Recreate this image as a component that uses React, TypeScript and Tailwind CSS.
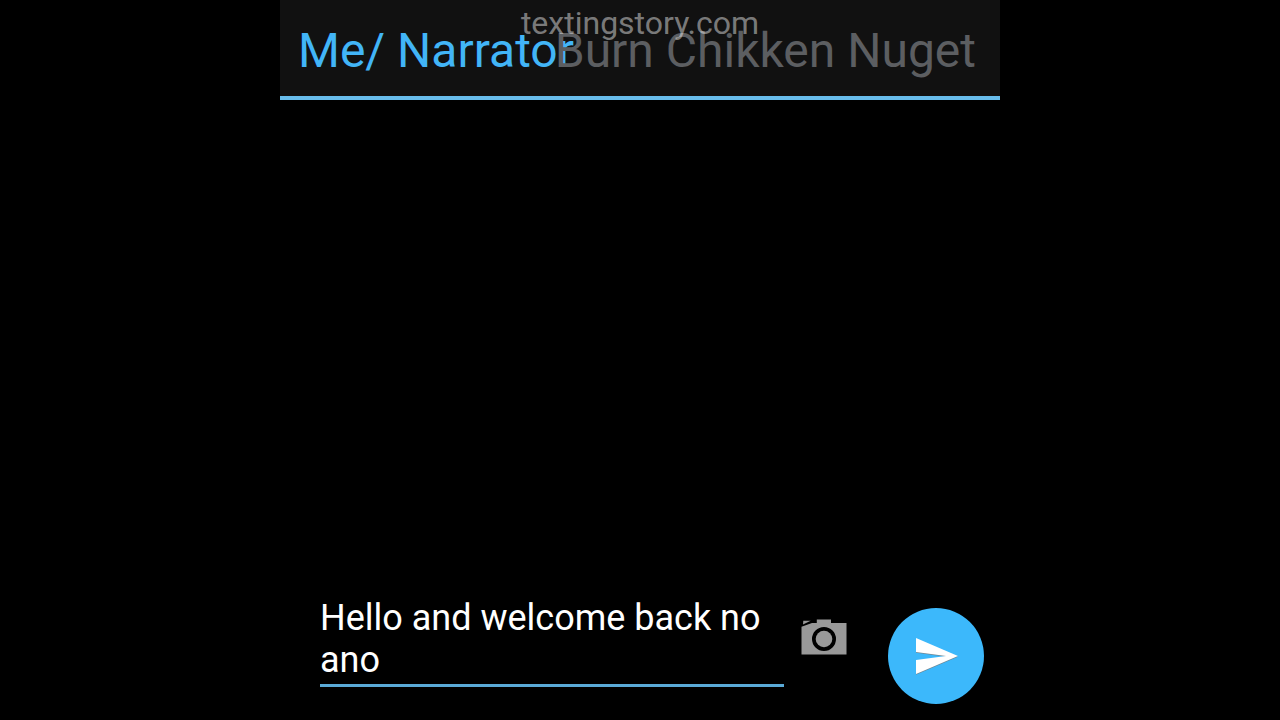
import React, { useState } from 'react';

const CameraIcon = () => (
  <svg viewBox="0 0 48 48" className="w-12 h-12" aria-hidden="true">
    <path
      fill="#999999"
      fillRule="evenodd"
      d="M16.800 5.500h14.200v3.500h15.500v31.500H1.500V12.800L12 9h4.800zM24 13a12 12 0 1 0 0 24a12 12 0 1 0 0-24z"
    />
    <path fill="#999999" d="M3.300 6.700H10.700L3 10.600z" />
    <circle cx="24" cy="25" r="8.300" fill="#999999" />
  </svg>
);

const SendIcon = () => (
  <svg viewBox="0 0 24 24" className="w-12 h-12" aria-hidden="true">
    <path fill="#6f8794" transform="translate(0 .35)" d="M2.010 21L23 12 2.010 3 2 10l15 2-15 2z" />
    <path fill="#ffffff" d="M2.010 21L23 12 2.010 3 2 10l15 2-15 2z" />
  </svg>
);

export default function App() {
  const [message, setMessage] = useState('Hello and welcome back no ano');
  const [sender, setSender] = useState<'me' | 'other'>('me');

  return (
    <div className="min-h-screen bg-black font-[Roboto,sans-serif]">
      <main className="relative flex flex-col w-full max-w-[720px] min-h-screen mx-auto">
        <header className="flex h-[100px] pl-[18px] pr-6 bg-[#111111] border-b-4 border-[#68bdec] text-5xl whitespace-nowrap">
          <button
            type="button"
            onClick={() => setSender('me')}
            className={`flex-1 min-w-0 pt-1.5 text-left ${sender === 'me' ? 'text-[#42b5f7]' : 'text-[#5c5e61]'}`}
          >
            Me/ Narrator
          </button>
          <button
            type="button"
            onClick={() => setSender('other')}
            className={`shrink-0 pt-1.5 ${sender === 'other' ? 'text-[#42b5f7]' : 'text-[#5c5e61]'}`}
          >
            Burn Chikken Nuget
          </button>
        </header>
        <p className="absolute inset-x-0 top-1 text-center text-[32px] leading-[38px] text-white/45 pointer-events-none">
          textingstory.com
        </p>

        <section className="flex-1" aria-label="Conversation" />

        <form
          className="flex items-end pl-10 pr-4 pb-4"
          onSubmit={(e) => e.preventDefault()}
        >
          <textarea
            aria-label="Message"
            rows={2}
            value={message}
            onChange={(e) => setMessage(e.target.value)}
            className="flex-1 min-w-0 mb-[17px] pb-[3px] border-b-3 border-[#5aa9d6] text-4xl leading-[42px] text-white resize-none outline-none overflow-hidden"
          />
          <button type="button" aria-label="Add picture" className="ml-4 mb-[42px]">
            <CameraIcon />
          </button>
          <button
            type="submit"
            aria-label="Send"
            className="flex items-center justify-center shrink-0 w-24 h-24 ml-10 rounded-full bg-[#3cb8fb]"
          >
            <SendIcon />
          </button>
        </form>
      </main>
    </div>
  );
}
